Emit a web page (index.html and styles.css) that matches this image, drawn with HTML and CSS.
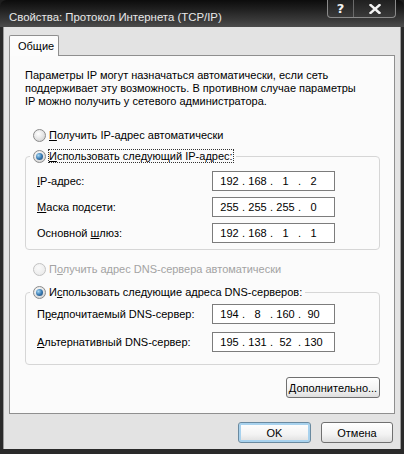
FILE: index.html
```html
<!DOCTYPE html>
<html lang="ru">
<head>
<meta charset="utf-8">
<title>Свойства: Протокол Интернета (TCP/IP)</title>
<link rel="stylesheet" href="styles.css">
</head>
<body>
<div class="window">
  <div class="titlebar">
    <span class="title">Свойства: Протокол Интернета (TCP/IP)</span>
    <div class="caption-btns">
      <span class="cbtn help">?</span>
      <span class="cbtn close"><svg width="12" height="10" viewBox="0 0 12 10"><path d="M1.5 1 L10.5 9 M10.5 1 L1.5 9" stroke="#f2f2f2" stroke-width="2.4" stroke-linecap="square"/></svg></span>
    </div>
  </div>
  <div class="client">
    <div class="tabs"><div class="tab">Общие</div></div>
    <div class="panel">
      <p class="intro">Параметры IP могут назначаться автоматически, если сеть<br>поддерживает эту возможность. В противном случае параметры<br>IP можно получить у сетевого администратора.</p>

      <div class="radio-row r-first"><span class="radio"></span><span><u>П</u>олучить IP-адрес автоматически</span></div>
      <fieldset class="group g-ip">
        <legend class="radio-row"><span class="radio checked"></span><span class="focus"><u>И</u>спользовать следующий IP-адрес:</span></legend>
        <div class="field"><span class="label"><u>I</u>P-адрес:</span>
          <div class="ip"><span class="oct">192</span><span class="dot">.</span><span class="oct">168</span><span class="dot">.</span><span class="oct">1</span><span class="dot">.</span><span class="oct">2</span></div></div>
        <div class="field"><span class="label"><u>М</u>аска подсети:</span>
          <div class="ip"><span class="oct">255</span><span class="dot">.</span><span class="oct">255</span><span class="dot">.</span><span class="oct">255</span><span class="dot">.</span><span class="oct">0</span></div></div>
        <div class="field"><span class="label">Основной <u>ш</u>люз:</span>
          <div class="ip"><span class="oct">192</span><span class="dot">.</span><span class="oct">168</span><span class="dot">.</span><span class="oct">1</span><span class="dot">.</span><span class="oct">1</span></div></div>
      </fieldset>

      <div class="radio-row r-dns disabled"><span class="radio"></span><span>П<u>о</u>лучить адрес DNS-сервера автоматически</span></div>
      <fieldset class="group g-dns">
        <legend class="radio-row"><span class="radio checked"></span><span>И<u>с</u>пользовать следующие адреса DNS-серверов:</span></legend>
        <div class="field"><span class="label">П<u>р</u>едпочитаемый DNS-сервер:</span>
          <div class="ip"><span class="oct">194</span><span class="dot">.</span><span class="oct">8</span><span class="dot">.</span><span class="oct">160</span><span class="dot">.</span><span class="oct">90</span></div></div>
        <div class="field"><span class="label"><u>А</u>льтернативный DNS-сервер:</span>
          <div class="ip"><span class="oct">195</span><span class="dot">.</span><span class="oct">131</span><span class="dot">.</span><span class="oct">52</span><span class="dot">.</span><span class="oct">130</span></div></div>
      </fieldset>

      <div class="adv-row"><button class="btn adv"><u>Д</u>ополнительно...</button></div>
    </div>
    <div class="footer">
      <button class="btn ok">OK</button>
      <button class="btn cancel">Отмена</button>
    </div>
  </div>
</div>
</body>
</html>
```

FILE: styles.css
```css
* { box-sizing: border-box; }
html, body { margin: 0; padding: 0; background: #1e1e1e; }
body { width: 404px; height: 454px; overflow: hidden; font-family: "Liberation Sans", Arial, sans-serif; font-size: 11px; color: #000; }

.window {
  width: 404px; height: 454px;
  display: flex; flex-direction: column;
  background: #2a2a2a;
  border-radius: 6px 6px 0 0;
  overflow: hidden;
}

.titlebar {
  height: 27px; flex: none;
  display: flex; align-items: flex-start;
  background: linear-gradient(#0c0c0c 0%, #1d1d1d 30%, #3a3a3a 75%, #4c4c4c 100%);
  padding-left: 9px;
}
.title {
  color: #e8e8e8; font-size: 11.4px; line-height: 14px;
  margin-top: 10px; white-space: nowrap;
}
.caption-btns {
  margin-left: auto; margin-right: 8px;
  display: flex;
  height: 18px;
  border: 1px solid #8a8a8a; border-top: none;
  border-radius: 0 0 4px 4px;
  background: linear-gradient(#202020, #3a3a3a);
}
.cbtn { display: flex; align-items: center; justify-content: center; color: #f2f2f2; font-weight: bold; font-size: 13px; font-family: "DejaVu Sans", sans-serif; }
.cbtn.help { width: 26px; border-right: 1px solid #6a6a6a; }
.cbtn.close { width: 41px; }

.client {
  flex: 1;
  background: #e3e3e3;
  margin: 0 3px 5px 3px;
  border-left: 1px solid #9a9a9a;
  border-right: 1px solid #9a9a9a;
  padding: 8px 5px 0 5px;
  display: flex; flex-direction: column;
}

.tabs { display: flex; height: 20px; position: relative; z-index: 1; }
.tab {
  width: 50px; height: 21px;
  background: #fcfcfc;
  border: 1px solid #8f8f8f; border-bottom: none;
  border-radius: 2px 2px 0 0;
  padding: 4px 0 0 8px;
  line-height: 13px;
}

.panel {
  width: 386px; height: 359px;
  background: #fbfbfb;
  border: 1px solid #8f8f8f;
  padding: 0 14px 0 15px;
  display: flex; flex-direction: column;
}

.intro { margin: 13px 0 0 0; line-height: 13px; white-space: nowrap; }

.radio-row { display: flex; align-items: center; height: 16px; padding-left: 8px; white-space: nowrap; }
.radio-row.r-first { margin-top: 19px; }
.radio-row.r-dns { margin-top: 11px; }
.radio-row.disabled { color: #a3a3a3; }
.radio {
  width: 13px; height: 13px; flex: none;
  border-radius: 50%;
  border: 1px solid #8a8a8a;
  background: radial-gradient(circle at 40% 35%, #ffffff 0%, #e8e8e8 45%, #c9c9c9 100%);
  margin-right: 3px;
  position: relative;
}
.disabled .radio { border-color: #c2c2c2; background: radial-gradient(circle at 40% 35%, #fafafa, #e6e6e6); }
.radio.checked::after {
  content: ""; position: absolute; left: 2px; top: 2px;
  width: 7px; height: 7px; border-radius: 50%;
  background: radial-gradient(circle at 35% 35%, #a8d8f4 0%, #3a7cb4 50%, #1c3f66 100%);
}
.focus { outline: 1px dotted #333; outline-offset: 0; }

.group {
  margin: 5px 0 0 0;
  border: 1px solid #d6d6d6;
  border-radius: 4px;
  padding: 0 11px;
  min-width: 0;
}
.group legend { padding: 0 3px; margin-left: -7px; }
.g-ip { padding-top: 7px; padding-bottom: 6px; }
.g-dns { margin-top: 7px; padding-top: 4px; padding-bottom: 12px; }
.g-ip .field + .field { margin-top: 6px; }
.g-dns .field + .field { margin-top: 8px; }

.field { display: flex; align-items: center; height: 20px; }
.label { width: 175px; flex: none; white-space: nowrap; }
.ip {
  width: 123px; height: 20px;
  border: 1px solid #7c7c7c;
  background: #fff;
  display: flex; align-items: center;
  padding-left: 6px;
}
.oct { width: 21px; text-align: center; }
.dot { width: 7px; text-align: center; }

.adv-row { display: flex; justify-content: flex-end; margin-top: 12px; }

.btn {
  font-family: "Liberation Sans", Arial, sans-serif; font-size: 11px; color: #000;
  height: 21px; padding: 0;
  border: 1px solid #707070;
  border-radius: 3px;
  background: linear-gradient(#ffffff 0%, #f3f3f3 60%, #dedede 100%);
}
.btn.adv { width: 94px; }

.footer { display: flex; justify-content: flex-end; gap: 10px; margin-top: 8px; padding-right: 2px; }
.btn.ok { width: 73px; box-shadow: inset 0 0 0 2px #a8d2ee; border-color: #6a8aa0; }
.btn.cancel { width: 72px; }
```
